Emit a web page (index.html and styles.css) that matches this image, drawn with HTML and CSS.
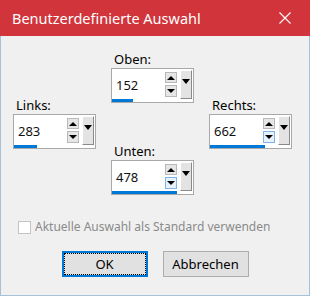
FILE: index.html
```html
<!DOCTYPE html>
<html lang="de">
<head>
  <meta charset="UTF-8">
  <title>Benutzerdefinierte Auswahl</title>
  <link rel="stylesheet" href="styles.css">
</head>
<body>

  <div class="window">
    <div class="titlebar">
      <span class="title">Benutzerdefinierte Auswahl</span>
      <svg class="close" width="12" height="12" viewBox="0 0 12 12">
        <path d="M0.5 0.5 L11.5 11.5 M11.5 0.5 L0.5 11.5" stroke="#fff" stroke-width="1.1" fill="none"/>
      </svg>
    </div>

    <div class="content">
      <div class="fields">
        <div class="col">
          <div class="field">
            <div class="label">Links:</div>
            <div class="spin">
              <div class="entry">
                <span class="value">283</span>
                <span class="bar" style="width: 23px"></span>
              </div>
              <div class="arrows">
                <span class="arrow up"></span>
                <span class="arrow down"></span>
              </div>
              <span class="drop"></span>
            </div>
          </div>
        </div>

        <div class="col middle">
          <div class="field">
            <div class="label">Oben:</div>
            <div class="spin">
              <div class="entry">
                <span class="value">152</span>
                <span class="bar" style="width: 21px"></span>
              </div>
              <div class="arrows">
                <span class="arrow up"></span>
                <span class="arrow down"></span>
              </div>
              <span class="drop"></span>
            </div>
          </div>
          <div class="field">
            <div class="label">Unten:</div>
            <div class="spin">
              <div class="entry">
                <span class="value">478</span>
                <span class="bar" style="width: 65px"></span>
              </div>
              <div class="arrows">
                <span class="arrow up"></span>
                <span class="arrow down hot"></span>
              </div>
              <span class="drop"></span>
            </div>
          </div>
        </div>

        <div class="col">
          <div class="field">
            <div class="label">Rechts:</div>
            <div class="spin">
              <div class="entry">
                <span class="value">662</span>
                <span class="bar" style="width: 55px"></span>
              </div>
              <div class="arrows">
                <span class="arrow up"></span>
                <span class="arrow down hot"></span>
              </div>
              <span class="drop"></span>
            </div>
          </div>
        </div>
      </div>

      <div class="check">
        <span class="checkbox"></span>
        <span>Aktuelle Auswahl als Standard verwenden</span>
      </div>

      <div class="buttons">
        <button class="btn default">OK</button>
        <button class="btn">Abbrechen</button>
      </div>
    </div>
  </div>

</body>
</html>
```

FILE: styles.css
```css
body {
  margin: 0;
  font-family: "Noto Sans", "Open Sans", sans-serif;
  font-size: 13px;
  color: #000;
  background-color: #f0f0f0;
}
.window {
  width: 310px;
  height: 296px;
  box-sizing: border-box;
  background-color: #f0f0f0;
  border: 1px solid #a6c2d9;
  border-top: none;
}
.titlebar {
  height: 36px;
  margin: 0 -1px;
  background-color: #d1343a;
  color: #fff;
  display: flex;
  align-items: center;
  justify-content: space-between;
  padding: 0 19px 0 12px;
}
.title {
  font-size: 14.5px;
  margin-top: -1px;
}
.close {
  display: block;
  margin-top: -1px;
}
.content {
  padding: 15px 0 0 12px;
}
.fields {
  display: grid;
  grid-template-columns: 83px 83px 83px;
  column-gap: 15px;
  align-items: center;
}
.middle {
  display: flex;
  flex-direction: column;
  gap: 40px;
}
.label {
  line-height: 16px;
  margin: 0 0 1px 3px;
}
.spin {
  display: flex;
  width: 83px;
  height: 35px;
  box-sizing: border-box;
  border: 1px solid #a9a9a9;
  background-color: #fff;
}
.entry {
  width: 53px;
  display: flex;
  flex-direction: column;
}
.value {
  flex: 1;
  display: flex;
  align-items: center;
  padding: 2px 0 0 4px;
  color: #111;
}
.bar {
  height: 3px;
  background-color: #0078d7;
}
.arrows {
  display: flex;
  flex-direction: column;
  gap: 2px;
  margin-top: 3px;
}
.arrow {
  width: 12px;
  height: 11px;
  box-sizing: border-box;
  border: 1px solid #b9b9b9;
  background-color: #e6e6e6;
  display: flex;
  align-items: center;
  justify-content: center;
}
.arrow.down {
  height: 12px;
}
.arrow.hot {
  border-color: #7eb4ea;
  background-color: #e5f1fb;
}
.arrow::before {
  content: "";
  border-left: 4px solid transparent;
  border-right: 4px solid transparent;
}
.arrow.up::before {
  border-bottom: 4px solid #000;
}
.arrow.down::before {
  border-top: 4px solid #000;
}
.drop {
  width: 12px;
  height: 29px;
  box-sizing: border-box;
  margin: 1px 1px 0 3px;
  background-color: #e3e3e3;
  border-top: 1px solid #fff;
  border-left: 1px solid #fff;
  border-right: 1px solid #8a8a8a;
  border-bottom: 1px solid #8a8a8a;
  display: flex;
  justify-content: center;
  padding-top: 8px;
}
.drop::before {
  content: "";
  height: 0;
  border-left: 4px solid transparent;
  border-right: 4px solid transparent;
  border-top: 5px solid #000;
}
.check {
  display: flex;
  align-items: center;
  gap: 4px;
  margin: 24px 0 0 5px;
  font-size: 12px;
  color: #8a8a8a;
  line-height: 16px;
}
.checkbox {
  width: 13px;
  height: 13px;
  box-sizing: border-box;
  border: 1px solid #c4c4c4;
  background-color: #fff;
}
.buttons {
  display: flex;
  justify-content: center;
  gap: 15px;
  margin: 16px 12px 0 0;
}
.btn {
  width: 86px;
  height: 26px;
  font-family: inherit;
  font-size: 13px;
  color: #000;
  background-color: #e1e1e1;
  border: 1px solid #adadad;
  padding: 0;
}
.btn.default {
  border: 2px solid #0078d7;
  outline: 1px dotted #000;
  outline-offset: -3px;
}
```
